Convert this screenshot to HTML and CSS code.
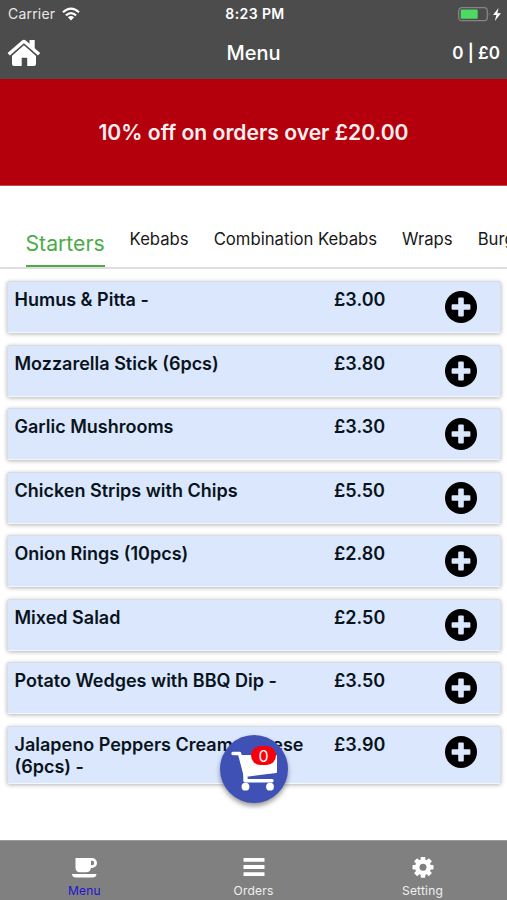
FILE: index.html
```html
<!DOCTYPE html>
<html lang="en">
<head>
<meta charset="utf-8">
<title>Menu</title>
<link rel="stylesheet" href="styles.css">
</head>
<body>
<svg width="0" height="0" class="defs">
  <symbol id="plus" viewBox="0 0 32 32"><circle cx="16" cy="16" r="16" fill="#000"/><path d="M13.200 7.600q0-1 1-1h3.600q1 0 1 1v5.600h5.600q1 0 1 1v3.600q0 1-1 1h-5.600v5.600q0 1-1 1h-3.600q-1 0-1-1v-5.600H7.600q-1 0-1-1v-3.600q0-1 1-1h5.600z" fill="#dbe7fd"/></symbol>
</svg>
<header class="header">
  <div class="status">
    <div class="carrier"><span>Carrier</span>
      <svg width="18" height="14" viewBox="0 0 18 14" fill="none" stroke="#fff" stroke-width="2.2"><path d="M1 5.200Q9-2 17 5.200M3.900 8.300q5.100-4.400 10.200 0"/><path d="M9 13.400 5.900 10.300q3.100-2.600 6.200 0z" fill="#fff" stroke="none"/></svg>
    </div>
    <span class="time">8:23 PM</span>
    <svg class="battery" width="44" height="16" viewBox="0 0 44 16"><rect x=".7" y="1.700" width="28.600" height="13" rx="3.200" fill="none" stroke="#858585" stroke-width="1.300"/><rect x="2.700" y="3.600" width="17" height="9.200" rx="1" fill="#4cd964"/><path d="M30.800 6q1.700 2.200 0 4.400z" fill="#858585"/><path d="M40.500 2 35 9h3.400l-1.600 6L43 7.200h-3.600z" fill="#fff"/></svg>
  </div>
  <div class="nav">
    <svg class="home" width="34" height="28" viewBox="0 0 34 28" fill="#fff"><path d="M22.500 1h5.200v10l-5.200-4.700zM16.900 6.100 29 16.800V25q0 2-2 2h-6.800v-8.300h-5.500V27H7q-2 0-2-2v-8.200z"/><path d="M.6 14 14.700 1.700q2.200-1.800 4.400 0L33.200 14l-2.200 2.600L16.900 4.300 2.800 16.600z"/><path d="M4.200 16.800 16.900 5.700l12.700 11.100" fill="none" stroke="#4c4c4c" stroke-width=".8"/></svg>
    <h1>Menu</h1>
    <span class="total">0 | £0</span>
  </div>
</header>
<section class="promo">10% off on orders over £20.00</section>
<nav class="tabs"><span class="active">Starters</span><span>Kebabs</span><span>Combination Kebabs</span><span>Wraps</span><span>Burgers</span></nav>
<main class="list">
  <div class="card"><span>Humus &amp; Pitta -</span><span>£3.00</span><svg><use href="#plus"/></svg></div>
  <div class="card"><span>Mozzarella Stick (6pcs)</span><span>£3.80</span><svg><use href="#plus"/></svg></div>
  <div class="card"><span>Garlic Mushrooms</span><span>£3.30</span><svg><use href="#plus"/></svg></div>
  <div class="card"><span>Chicken Strips with Chips</span><span>£5.50</span><svg><use href="#plus"/></svg></div>
  <div class="card"><span>Onion Rings (10pcs)</span><span>£2.80</span><svg><use href="#plus"/></svg></div>
  <div class="card"><span>Mixed Salad</span><span>£2.50</span><svg><use href="#plus"/></svg></div>
  <div class="card"><span>Potato Wedges with BBQ Dip -</span><span>£3.50</span><svg><use href="#plus"/></svg></div>
  <div class="card tall"><span>Jalapeno Peppers Cream Cheese (6pcs) -</span><span>£3.90</span><svg><use href="#plus"/></svg></div>
</main>
<div class="cart">
  <svg width="68" height="68" viewBox="0 0 68 68" fill="none" stroke="#fff" stroke-width="3.400" stroke-linecap="round" stroke-linejoin="round"><path d="M13 18.500h6.500L26 43"/><path d="M20.500 21H56v16L25 41z" fill="#fff" stroke-width="2"/><path d="M25 39.500v6.200h27"/><g fill="#fff" stroke="none"><circle cx="25.500" cy="51.700" r="3.900"/><circle cx="50" cy="51.700" r="3.900"/></g></svg>
  <span class="count">0</span>
</div>
<footer class="bottom">
  <div class="item current"><svg width="28" height="22" viewBox="0 0 28 22"><path fill="#fff" fill-rule="evenodd" d="M4.500 1H21a5 5 0 0 1 0 10h-1q-.7 4.200-5 4.200H9q-4.500 0-4.500-4.400zM20 3.800v4.400h1a2.200 2.200 0 0 0 0-4.400zM1 17h24.500q-.3 3.600-4 3.600H5Q1.300 20.600 1 17z"/></svg><span>Menu</span></div>
  <div class="item"><svg width="28" height="22" viewBox="0 0 28 22" fill="#fff"><rect x="3.500" y="1" width="21" height="3.800" rx=".5"/><rect x="3.500" y="8.100" width="21" height="3.800" rx=".5"/><rect x="3.500" y="15.200" width="21" height="3.800" rx=".5"/></svg><span>Orders</span></div>
  <div class="item"><svg width="28" height="22" viewBox="0 0 28 22"><g fill="#fff" transform="translate(14 10.200)"><g id="teeth"><rect x="-2.300" y="-10.500" width="4.600" height="21" rx=".8"/><rect x="-10.500" y="-2.300" width="21" height="4.600" rx=".8"/></g><use href="#teeth" transform="rotate(45)"/><circle r="8"/><circle r="3.500" fill="#808080"/></g></svg><span>Setting</span></div>
</footer>
</body>
</html>
```
FILE: styles.css
```css
* { box-sizing: border-box; }
body { margin: 0; width: 507px; height: 900px; overflow: hidden; position: relative; background: #fff; font-family: Inter, "Liberation Sans", sans-serif; display: flex; flex-direction: column; }
.defs { position: absolute; }
.header { height: 79px; flex: none; background: #4c4c4c; color: #fff; }
.status { height: 27px; display: grid; grid-template-columns: 1fr auto 1fr; align-items: center; padding: 0 5px 0 8px; font-size: 14px; }
.carrier { display: flex; align-items: center; gap: 7px; font-size: 14px; color: #e8e8e8; letter-spacing: .2px; }
.time { font-weight: 600; letter-spacing: .4px; }
.battery { justify-self: end; }
.nav { height: 52px; display: grid; grid-template-columns: 1fr auto 1fr; align-items: center; padding: 0 7px; }
.nav h1 { margin: 0; font-size: 20px; font-weight: 500; }
.total { justify-self: end; font-size: 17px; font-weight: 600; }
.promo { height: 107px; flex: none; background: #b4000c; color: #fff0f0; display: flex; justify-content: center; align-items: center; font-size: 21.100px; font-weight: 600; border-bottom: 1px solid #c94a50; }
.tabs { height: 83px; flex: none; display: flex; align-items: flex-end; gap: 25px; padding-left: 25.500px; border-bottom: 2px solid #dedede; font-size: 16.700px; color: #181818; white-space: nowrap; overflow: hidden; }
.tabs span { height: 40px; line-height: 24px; flex: none; }
.tabs .active { height: 40px; line-height: 32px; font-size: 21.200px; color: #4bab48; border-bottom: 2px solid #4eaa4b; }
.list { display: flex; flex-direction: column; gap: 11.550px; padding: 12px 6px 0 7px; }
.card { height: 52px; display: grid; grid-template-columns: 319.500px 111px 32px; padding: 8px 0 0 6.500px; background: #dbe7fd; border: 1px solid #d9dde5; border-bottom-color: #f4f7fc; border-radius: 3px; box-shadow: 0 1px 4px rgba(0,0,0,.3); color: #09131b; font-size: 18px; line-height: 22px; font-weight: 600; }
.card span { margin-top: -1px; }
.card svg { width: 32px; height: 32px; margin-top: 1px; }
.card.tall { height: 58px; }
.cart { position: absolute; left: 220px; top: 735px; width: 68px; height: 68px; border-radius: 50%; background: #3f51b5; box-shadow: 0 3px 5px rgba(0,0,0,.4); }
.count { position: absolute; left: 31px; top: 11px; width: 25px; height: 19px; border-radius: 10px; background: #f8000b; color: #fff; text-align: center; font-size: 16px; line-height: 20px; }
.bottom { margin-top: auto; height: 60px; flex: none; background: #808080; border-top: 1px solid #9a9a9a; display: grid; grid-template-columns: repeat(3, 1fr); }
.item { display: flex; flex-direction: column; align-items: center; padding-top: 16px; color: #f0f0f0; font-size: 12px; line-height: 16px; letter-spacing: .2px; }
.item span { margin-top: 4px; }
.current { color: #2114cf; }
```
